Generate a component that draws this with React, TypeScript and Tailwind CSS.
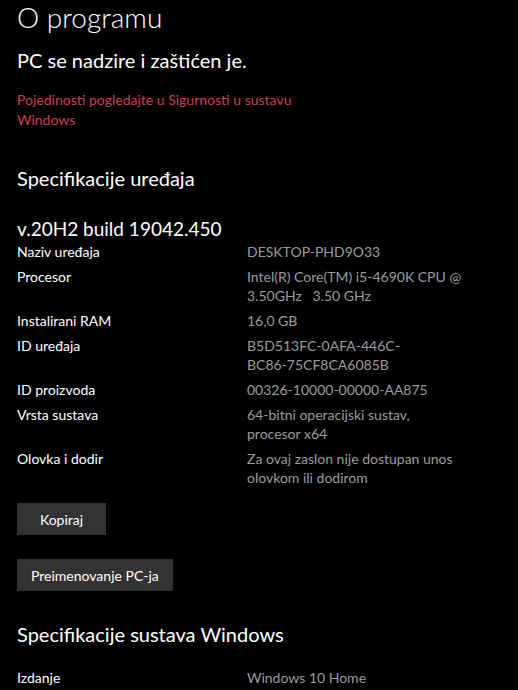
const specs: { label: string; value: string[] }[] = [
  { label: "Naziv uređaja", value: ["DESKTOP-PHD9O33"] },
  { label: "Procesor", value: ["Intel(R) Core(TM) i5-4690K CPU @", "3.50GHz   3.50 GHz"] },
  { label: "Instalirani RAM", value: ["16,0 GB"] },
  { label: "ID uređaja", value: ["B5D513FC-0AFA-446C-", "BC86-75CF8CA6085B"] },
  { label: "ID proizvoda", value: ["00326-10000-00000-AA875"] },
  { label: "Vrsta sustava", value: ["64-bitni operacijski sustav,", "procesor x64"] },
  { label: "Olovka i dodir", value: ["Za ovaj zaslon nije dostupan unos", "olovkom ili dodirom"] },
]

function SpecRow({ label, value }: { label: string; value: string[] }) {
  return (
    <div className="flex text-[14px] leading-[19px]">
      <div className="w-[230px] shrink-0 text-white">{label}</div>
      <div className="text-[#9c9c9c] whitespace-pre">
        {value.map((line) => (
          <div key={line}>{line}</div>
        ))}
      </div>
    </div>
  )
}

export default function App() {
  return (
    <div
      className="h-[690px] w-[518px] overflow-hidden bg-black pl-[17px] text-white"
      style={{ fontFamily: '"Segoe UI", Lato, "Open Sans", sans-serif' }}
    >
      <h1 className="text-[28px] font-light leading-[34px]">O programu</h1>

      <p className="mt-[13px] text-[20px] leading-[26px]">PC se nadzire i zaštićen je.</p>

      <p className="mt-[17px] w-[290px] text-[14px] leading-[20px] text-[#cf3d55]">
        Pojedinosti pogledajte u Sigurnosti u sustavu Windows
      </p>

      <h2 className="mt-[35px] text-[20px] leading-[26px]">Specifikacije uređaja</h2>

      <div className="mt-[25px] text-[19px] leading-[26px]">v.20H2 build 19042.450</div>

      <div className="flex flex-col gap-[6px]">
        {specs.map((s) => (
          <SpecRow key={s.label} label={s.label} value={s.value} />
        ))}
      </div>

      <div className="mt-[16px] flex flex-col items-start gap-[24px]">
        <button className="h-[32px] w-[89px] bg-[#333333] text-[14px] text-white">Kopiraj</button>
        <button className="h-[32px] px-[14px] bg-[#333333] text-[14px] text-white">Preimenovanje PC-ja</button>
      </div>

      <h2 className="mt-[30px] text-[20px] leading-[26px]">Specifikacije sustava Windows</h2>

      <div className="mt-[21px]">
        <SpecRow label="Izdanje" value={["Windows 10 Home"]} />
      </div>
    </div>
  )
}
